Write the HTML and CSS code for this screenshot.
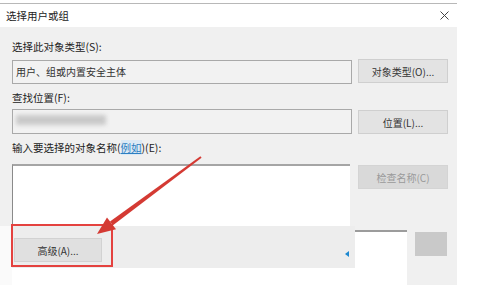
FILE: index.html
```html
<!DOCTYPE html>
<html lang="zh-CN">
<head>
<meta charset="utf-8">
<link rel="stylesheet" href="styles.css">
</head>
<body>
<div class="page">
  <div class="dialog">
    <div class="titlebar">
      <span class="title">选择用户或组</span>
      <svg class="close" width="9" height="9" viewBox="0 0 9 9"><path d="M0.5 0.5L8.5 8.5M8.5 0.5L0.5 8.5" stroke="#444" stroke-width="1"/></svg>
    </div>
    <div class="body">
      <div class="label l1">选择此对象类型(S):</div>
      <div class="row r1">
        <div class="field">用户、组或内置安全主体</div>
        <div class="btn">对象类型(O)...</div>
      </div>
      <div class="label l2">查找位置(F):</div>
      <div class="row r2">
        <div class="field"><div class="blur"></div></div>
        <div class="btn">位置(L)...</div>
      </div>
      <div class="label l3">输入要选择的对象名称(<span class="link">例如</span>)(E):</div>
      <div class="row r3">
        <div class="textarea-col"><div class="textarea"></div></div>
        <div class="btn disabled">检查名称(C)</div>
      </div>
    </div>
  </div>
  <div class="footer">
    <div class="f-left"></div>
    <div class="f-strip">
      <div class="btn adv">高级(A)...</div>
      <div class="tri"></div>
    </div>
    <div class="f-mid"></div>
    <div class="f-right"><div class="square"></div></div>
  </div>
  <div class="redbox"></div>
  <svg class="arrow" width="500" height="285" viewBox="0 0 500 285">
    <polygon points="201.6,157.8 200.4,156.2 110,221.4 113,225.2" fill="#d43a33"/>
    <polygon points="97,234 116,229.2 107,217.4" fill="#d43a33"/>
  </svg>
</div>
</body>
</html>
```
FILE: styles.css
```css
html, body {
  margin: 0;
  padding: 0;
  background: #fff;
}
.page {
  position: relative;
  width: 500px;
  height: 285px;
  overflow: hidden;
  font-family: "Noto Sans CJK SC", "Microsoft YaHei", sans-serif;
  font-size: 10.5px;
  color: #222;
  background: #fff;
}
.dialog {
  margin-top: 3px;
  width: 457px;
  border-top: 1px solid #b8b8b8;
}
.titlebar {
  height: 23px;
  background: #fff;
  display: flex;
  align-items: center;
  justify-content: space-between;
  padding: 0 8px 0 6px;
}
.title {
  font-size: 10.5px;
  color: #222;
}
.close {
  display: block;
}
.body {
  background: #f0f0f0;
  padding: 0 9px 0 12px;
  display: flex;
  flex-direction: column;
}
.label {
  line-height: 14px;
  height: 14px;
  color: #222;
}
.l1 { margin-top: 13px; }
.l2 { margin-top: 7px; }
.l3 { margin-top: 7px; }
.link {
  color: #2d7fc1;
  text-decoration: underline;
  background: #dbe9f5;
}
.row {
  display: flex;
  gap: 6px;
}
.r1 { margin-top: 6px; height: 24px; }
.r2 { margin-top: 4px; height: 25px; }
.r3 { margin-top: 9px; height: 62px; }
.field {
  flex: 1;
  box-sizing: border-box;
  border: 1px solid #a9a9a9;
  background: #f2f2f2;
  padding: 0 3px;
  line-height: 22px;
  font-size: 10px;
  color: #333;
  display: flex;
  align-items: center;
}
.blur {
  width: 90px;
  height: 10px;
  margin-top: -4px;
  background: #c9c9c9;
  filter: blur(2px);
}
.btn {
  width: 90px;
  box-sizing: border-box;
  border: 1px solid #cfcfcf;
  background: #e3e3e3;
  display: flex;
  align-items: center;
  justify-content: center;
  font-size: 10px;
  color: #333;
}
.r1 .btn { height: 24px; margin-top: -1px; }
.r2 .btn { height: 24px; margin-top: 1px; }
.btn.disabled {
  height: 24px;
  margin-top: 1px;
  background: #d9d9d9;
  border-color: #d4d4d4;
  color: #9a9a9a;
}
.textarea-col {
  flex: 1;
}
.textarea {
  width: 338px;
  height: 62px;
  box-sizing: border-box;
  background: #fff;
  border-top: 2px solid #a5a5a5;
  border-left: 1px solid #8a8a8a;
}
.footer {
  display: flex;
  height: 59px;
}
.f-left {
  width: 12px;
  background: #fafafa;
}
.f-strip {
  width: 343px;
  height: 42px;
  background: #ededed;
  box-sizing: border-box;
  padding: 12px 0 0 2px;
  display: flex;
  align-items: flex-start;
}
.btn.adv {
  width: 88px;
  height: 24px;
  background: #e0e0e0;
  border-color: #d2d2d2;
}
.tri {
  margin-left: auto;
  margin-right: 6px;
  margin-top: 13px;
  width: 0;
  height: 0;
  border-top: 3px solid transparent;
  border-bottom: 3px solid transparent;
  border-right: 4px solid #1e88d0;
}
.f-mid {
  width: 52px;
  box-sizing: border-box;
  border-top: 4px solid #f0f0f0;
  background: linear-gradient(#9c9c9c 0 2px, #fff 2px);
}
.f-right {
  width: 50px;
  background: #f0f0f0;
  box-sizing: border-box;
  padding: 6px 0 0 8px;
}
.square {
  width: 32px;
  height: 24px;
  background: #c9c9c9;
}
.redbox {
  position: absolute;
  left: 11px;
  top: 224px;
  width: 102px;
  height: 43px;
  box-sizing: border-box;
  border: 2px solid #e4423f;
}
.arrow {
  position: absolute;
  left: 0;
  top: 0;
  pointer-events: none;
}
```
